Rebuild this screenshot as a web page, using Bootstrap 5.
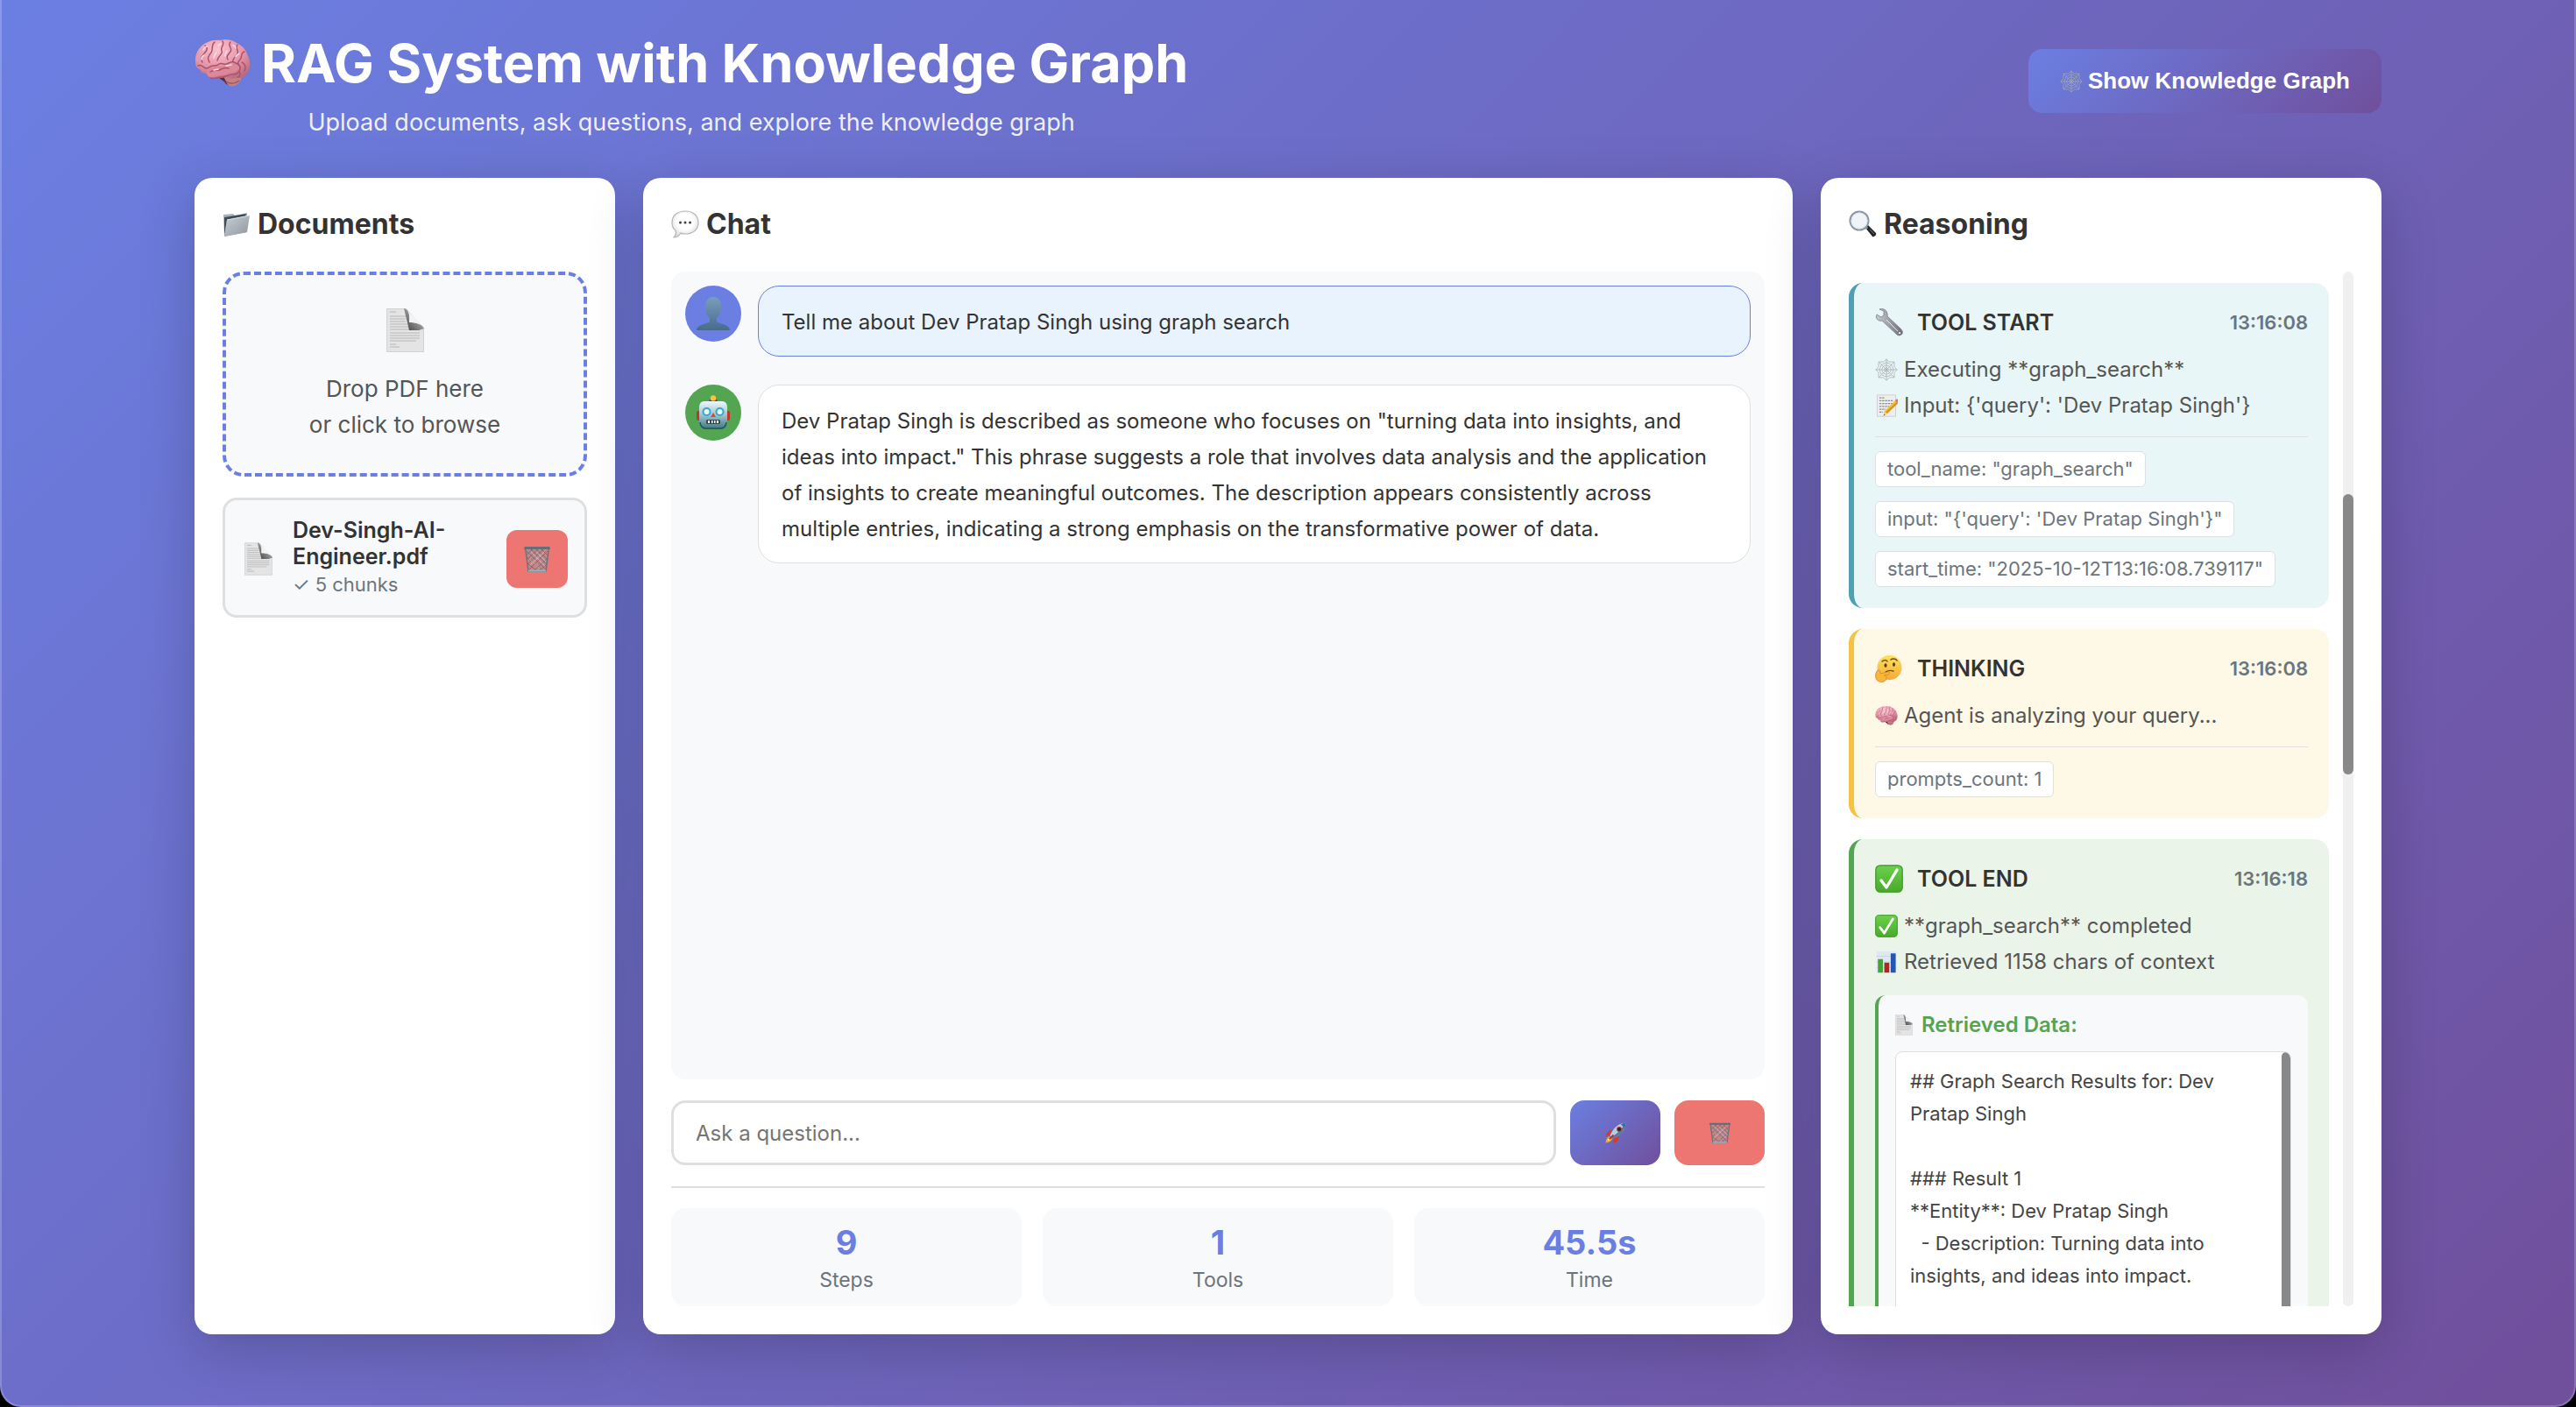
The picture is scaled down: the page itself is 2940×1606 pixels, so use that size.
<!DOCTYPE html>
<html lang="en">
<head>
<meta charset="utf-8">
<meta name="viewport" content="width=device-width, initial-scale=1">
<title>RAG System with Knowledge Graph</title>
<link href="https://cdn.jsdelivr.net/npm/bootstrap@5.3.0/dist/css/bootstrap.min.css" rel="stylesheet">
<style>
:root{--brand:#6b7fe2;--brand-end:#704f9c;--line:#dedfe0;--soft:#f8f9fb;--ink:#333;--body:#555;--muted-ink:#6c757d;--ok:#53a551;--danger:#ed7672}
html{background:#000;height:100%}
body{font-family:Inter,"Liberation Sans",sans-serif;color:var(--ink);background:none;height:100vh;min-height:1000px;margin:0}
.shell{height:100%;padding:32px 32px 81px;background:linear-gradient(135deg,var(--brand),var(--brand-end));border:2px solid rgba(255,255,255,.2);border-top:0;background-origin:border-box;border-radius:0 0 24px 24px}
.wrap{max-width:2496px}
.page-title{font-size:61px;line-height:80px;font-weight:700;color:#fff;gap:12px}
.page-sub{font-size:27px;line-height:44px;color:rgba(255,255,255,.9);margin-top:6px}
.page-head{height:139px}
.grad{background:linear-gradient(135deg,var(--brand),var(--brand-end));color:#fff;border:0}
.grad:hover,.del:hover{color:#fff;opacity:.9}
.graph-btn{font-family:"Liberation Sans",sans-serif;font-size:26px;line-height:29px;font-weight:700;padding:22px 36px;border-radius:16px;gap:6px}
.panels{display:grid;grid-template-columns:480px minmax(0,1fr) 640px;grid-template-rows:minmax(0,1fr);gap:32px;margin-top:32px;min-height:0}
.panel{background:#fff;border-radius:20px;padding:32px;box-shadow:0 16px 64px rgba(0,0,0,.2);min-height:0}
.panel-title{font-size:32px;line-height:42px;font-weight:700;gap:8px;margin:0 0 33px}
.pic{display:block;flex:none}
.p20{width:20px;height:24px}.p26{width:26px;height:26px}.p32{width:32px;height:32px}.p40{width:40px;height:40px}
.p48{width:43px;height:50px}.p62{width:64px;height:56px}.pdoc{width:32px;height:38px}
.drop{border:4px dashed var(--brand);border-radius:24px;background:var(--soft);height:234px;padding-top:38px;gap:21px;color:var(--body);font-size:26px;line-height:41px;cursor:pointer}
.file-card{border:3px solid var(--line);border-radius:16px;background:var(--soft);margin-top:24px;padding:19px 19px 17px 22px;gap:23px}
.file-name{font-size:25px;line-height:30px;font-weight:600}
.file-meta{font-size:22px;line-height:35px;color:var(--muted-ink)}
.del{background:var(--danger);border:0;border-radius:12px}
.del-file{width:70px;height:66px}
.feed{background:var(--soft);border-radius:16px;padding:16px;gap:32px;overflow:hidden}
.msg{gap:19px}
.avatar{width:64px;height:64px;border-radius:50%;flex:none}
.bubble{border:1px solid var(--line);border-radius:24px;background:#fff;padding:20px 28px 18px 26px;font-size:24px;line-height:41px}
.mine{background:#e9f3fd;border-color:var(--brand)}
.av-user{background:var(--brand)}.av-bot{background:var(--ok)}
.ask{gap:16px;margin-top:24px}
.ask-input{height:74px;border:3px solid var(--line);border-radius:16px;padding:0 25px;font-size:24px;color:var(--ink)}
.ask-input::placeholder{color:#757575}
.ask-btn{width:103px;height:74px;border-radius:16px}
.stats{border-top:2px solid var(--line);margin-top:24px;padding-top:23px;gap:24px}
.stat{background:var(--soft);border-radius:16px;height:112px}
.stat-num{font-size:38px;line-height:46px;font-weight:700;color:var(--brand)}
.stat-lab{font-size:23px;line-height:40px;color:var(--muted-ink)}
.scroll-pane{gap:16px;min-height:0}
.steps{overflow:hidden;padding-top:13px;gap:24px}
.step{flex:none;border-left:6px solid;border-radius:16px;padding:24px}
.s-start{background:#e9f6f7;border-color:#4fa0b5}
.s-think{background:#fef8e6;border-color:#f5c344}
.s-end{background:#eaf4e9;border-color:var(--ok)}
.step-head{height:42px;gap:16px;margin-bottom:12px}
.step-name{font-size:25px;line-height:42px;font-weight:600;color:var(--ink)}
.step-time{font-size:22px;line-height:38px;font-weight:600;color:var(--muted-ink)}
.step-line{font-size:24px;line-height:41px;color:var(--body);gap:7px}
.chips{border-top:1px solid var(--line);margin-top:15px;padding-top:16px;gap:16px}
.chip{background:#fff;border:1px solid var(--line);border-radius:6px;padding:0 13px;font-size:22px;line-height:39px;color:var(--muted-ink)}
.data-box{background:var(--soft);border-left:4px solid var(--ok);border-radius:12px;padding:16px 19px;margin-top:18px}
.data-head{font-size:24px;line-height:36px;font-weight:600;color:var(--ok);gap:10px;margin-bottom:12px}
.data-text{background:#fff;border:1px solid var(--line);border-radius:8px;height:420px;overflow:hidden}
.data-pre{font-family:inherit;font-size:22px;line-height:37px;color:#444;white-space:pre-wrap;padding:15px 16px;margin:0;overflow:hidden}
.thumb-in{width:10px;border-radius:5px;background:#888;flex:none}
.track{width:12px;border-radius:6px;background:#f0f0f0;padding-top:254px;flex:none}
.thumb{height:320px;border-radius:6px;background:#888}
</style>
</head>
<body>
<svg width="0" height="0" class="position-absolute" aria-hidden="true">
<defs>
<linearGradient id="gFold" x1="0" y1="0" x2="1" y2="1"><stop offset="0" stop-color="#c9ced4"/><stop offset="1" stop-color="#8f969e"/></linearGradient>
<linearGradient id="gUser" x1="0" y1="0" x2="0" y2="1"><stop offset="0" stop-color="#7b9dbd"/><stop offset="1" stop-color="#466b8d"/></linearGradient>
<linearGradient id="gBot" x1="0" y1="0" x2="0" y2="1"><stop offset="0" stop-color="#eef8fa"/><stop offset=".5" stop-color="#9cc3ca"/><stop offset="1" stop-color="#3b7683"/></linearGradient>
<linearGradient id="gCheck" x1="0" y1="0" x2="0" y2="1"><stop offset="0" stop-color="#6bd04b"/><stop offset="1" stop-color="#46ab2a"/></linearGradient>
<linearGradient id="gFace" x1="0" y1="0" x2="0" y2="1"><stop offset="0" stop-color="#fde35a"/><stop offset="1" stop-color="#f3a93a"/></linearGradient>
<radialGradient id="gBrain" cx=".42" cy=".25" r=".8"><stop offset="0" stop-color="#f9c3d1"/><stop offset=".6" stop-color="#e592a6"/><stop offset="1" stop-color="#b96a7d"/></radialGradient>
<radialGradient id="gTalk" cx=".5" cy=".4" r=".6"><stop offset=".5" stop-color="#fff"/><stop offset="1" stop-color="#dcdcdc"/></radialGradient>
<linearGradient id="gSteel" x1="0" y1="0" x2="1" y2="0"><stop offset="0" stop-color="#c8ccd2"/><stop offset="1" stop-color="#6d7078"/></linearGradient>
<linearGradient id="gCurl" x1="0" y1="1" x2="1" y2="0"><stop offset="0" stop-color="#3c3c3c"/><stop offset=".5" stop-color="#8f8f8f"/><stop offset="1" stop-color="#f4f4f4"/></linearGradient>
</defs>
<symbol id="brain" viewBox="0 0 64 56">
<path d="M28 45c3 3 6 3 8 7l4 1-4-9z" fill="#5b3038"/>
<path d="M33 43c6-3 14-4 20-2 2 5-2 11-7 13-5 1-9-1-10-5z" fill="#c67f83"/><path d="M36 49c4 3 10 3 15-1" fill="none" stroke="#9c5660" stroke-width="1.500"/>
<path d="M1 27C0 18 5 9 13 5c5-3 11-4 17-3 7-2 14 0 18 3 7 3 11 8 13 15 3 6 3 13 0 18-2 5-7 8-13 7-4 1-9 0-13-2-4 2-8 3-11 2-4 2-9 0-10-5-4 0-7-2-8-5-4-1-5-5-5-8z" fill="url(#gBrain)"/>
<path d="M14 41c0-5 3-8 8-8 4-3 8-1 11-2 5-3 9-1 12-3 4-1 7 1 6 5-2 4-6 6-11 6-4 3-9 3-13 3-5 3-10 3-13-1z" fill="#dd8799"/>
<path d="M12 8c4 3 2 6-1 9s-5 6-2 10M23 4c-5 4-1 8-4 12s-5 6-2 11M32 3c3 4-3 7-1 11s-4 5-5 11M41 4c-4 4 3 7 0 11s-5 5-3 9M49 7c-3 4 2 7 0 11s-6 4-5 8M57 15c-5 1-2 6-5 9s-3 4 0 8M4 31c4-2 6 2 9 3s5-4 9-3 6-4 11-2 7-4 12-2 8 4 7 8-5 6-9 6-8 3-12 3-9 3-13 1M18 38c4-3 7-1 10-2s6-4 11-2M54 27c4 2 5 6 3 10M51 38c2 2 1 4-1 6" fill="none" stroke="#a9546c" stroke-width="1.500" stroke-linecap="round"/>
<path d="M10 13c1-2 3-4 5-4M27 8c1-1 2-2 3-2M44 8c1 0 3 1 3 3M8 24c0-2 1-4 3-5M22 22c1-3 2-5 3-6M35 20c0-3 1-4 2-6M47 21c1-2 3-3 4-4M22 36l5-1M36 31l6-1" fill="none" stroke="#fddbe3" stroke-width="1.500" stroke-linecap="round"/>
</symbol>
<symbol id="folder" viewBox="0 0 32 32">
<path d="M1 5l11-1 2 2 14-3v22L2 30z" fill="#aab2b9"/><path d="M2 8l25-4-1 3-21 4-3 18z" fill="#3f4b56"/><path d="M5 11l26-5-3 19L2 30z" fill="url(#gFold)"/><path d="M5 11l26-5" stroke="#dfe4e8" fill="none"/>
</symbol>
<symbol id="doc" viewBox="0 0 43 50">
<path d="M0 0h22l21 22v28H0z" fill="#e4e4e4"/><path d="M.5.5h22L42.500 23v26.500H.5z" fill="none" stroke="#d2d2d2"/>
<path d="M4 4h7M4 9h18M4 12h18M4 15h18M4 18h20M4 21h21M4 24h22M4 28h34M4 31h34M4 34h34M4 37h30M4 41h7M4 44h11" stroke="#b5b5b5" stroke-width="1.100" fill="none"/>
<path d="M20 0c5 1 7 6 6 16 8 0 15 2 17 7l-6 2H26z" fill="url(#gCurl)"/><path d="M22 0l21 22c-4-5-10-6-17-6 1-8 0-13-4-16z" fill="#f3f3f3"/>
</symbol>
<symbol id="bin" viewBox="0 0 32 32">
<path d="M2.500 3L6 30h20l3.500-27" fill="#a5959c" fill-opacity=".45" stroke="#6f7480" stroke-width="1.600"/>
<path d="M4 7l22 21M8 4l19 18M14 4l14 13M20 4l9 9M4 14l18 15M5 21l10 8M28 7L7 28M24 4L5 22M18 4L4 17M12 4L3 12M28 15L13 29M27 22l-8 7" stroke="#65707a" stroke-width=".9"/>
<path d="M9 8l16 16M15 8l11 11M7 16l12 11M24 8L8 23" stroke="#d9dde0" stroke-width=".5"/>
<rect x="1" y="2" width="30" height="3" rx="1.500" fill="#666e78"/><path d="M6 29.500h20" stroke="#9ab0c0" stroke-width="2"/>
</symbol>
<symbol id="talk" viewBox="0 0 32 32">
<path d="M16 1c9 0 15 5 15 13S25 27 16 27c-2 0-4 0-5-1-2 3-5 5-8 5 2-2 3-5 2-8-3-2-4-5-4-9C1 6 7 1 16 1z" fill="url(#gTalk)" stroke="#b5b5b5" stroke-width="1.200"/>
<circle cx="10.500" cy="14" r="1.500" fill="#444"/><circle cx="16" cy="14" r="1.500" fill="#444"/><circle cx="21.500" cy="14" r="1.500" fill="#444"/>
</symbol>
<symbol id="lens" viewBox="0 0 32 32">
<path d="M19 20l3-3 9 9c1 2-2 5-4 4z" fill="#24272a"/><path d="M18 18l3 3" stroke="#8b98a5" stroke-width="3"/><circle cx="12" cy="12" r="10.500" fill="#f1f4f6" stroke="#8997a5" stroke-width="2"/><circle cx="12" cy="12" r="9" fill="none" stroke="#dbe3ea" stroke-width="1"/><path d="M24 22l5 5" stroke="#777" stroke-width="1"/>
</symbol>
<symbol id="person" viewBox="0 0 40 40">
<path d="M20 1c6 0 9 4 9 11 0 6-2 10-5 13v4c3 3 15 3 15 10H1c0-7 12-7 15-10v-4c-3-3-5-7-5-13 0-7 3-11 9-11z" fill="url(#gUser)"/>
</symbol>
<symbol id="robot" viewBox="0 0 40 40">
<rect x="1" y="18" width="5" height="11" rx="2" fill="#c3342f"/><rect x="34" y="18" width="5" height="11" rx="2" fill="#c3342f"/>
<path d="M15 8c0-3 2-4 5-4s5 1 5 4z" fill="#6a3c78"/><circle cx="20" cy="3.500" r="3.200" fill="#f7c43a"/>
<path d="M10 7h20c4 0 6 3 6 7v17c0 5-3 8-7 8H11c-4 0-7-3-7-8V14c0-4 2-7 6-7z" fill="url(#gBot)"/>
<path d="M5 31c0 4 3 7 7 7h16c4 0 7-3 7-7" fill="none" stroke="#24535f" stroke-width="1.500"/>
<circle cx="12.500" cy="19" r="5" fill="#35a5d1"/><circle cx="27.500" cy="19" r="5" fill="#35a5d1"/><circle cx="12.500" cy="19" r="3" fill="#eafcff"/><circle cx="27.500" cy="19" r="3" fill="#eafcff"/>
<path d="M20 20l3 5h-6z" fill="#d9463c"/><rect x="12" y="28" width="16" height="5" rx="1.500" fill="#3c4850"/><path d="M14 30.500h2M18 30.500h1.500M21 30.500h1.500M24 30.500h2" stroke="#fff" stroke-width="3"/>
</symbol>
<symbol id="rocket" viewBox="0 0 32 32">
<path d="M11 12c-4 0-8 4-9 9l6-2zM20 20c1 5-2 9-7 11l0-7z" fill="#d83a22"/>
<path d="M7 21c-4 2-5 6-5 9 3 0 7-1 9-5z" fill="#f6a51f"/><path d="M8 22c-2 1-3 3-3 5 2 0 4-1 5-3z" fill="#fff0a0"/>
<path d="M30 2c-9 0-16 6-20 14l-2 4 4 4 4-2C24 18 30 11 30 2z" fill="#b9cde0"/><path d="M30 2c0 9-6 16-14 20l-4 2-2-2C19 17 26 9 30 2z" fill="#5579a5"/><path d="M30 2c-3 0-5 1-7 2l5 5c1-2 2-5 2-7z" fill="#3d6da7"/>
<circle cx="21" cy="11" r="3.300" fill="#222a35" stroke="#d04a35" stroke-width="1.200"/><path d="M7 25l6-6" stroke="#c9301f" stroke-width="2.500"/>
</symbol>
<symbol id="wrench" viewBox="0 0 32 32">
<path d="M5 1l5 2 0 5-3 2-5-3C0 11 3 15 8 14l16 15c2 3 6 2 7 0s0-4-2-6L14 9C15 4 11-1 5 1z" fill="url(#gSteel)" stroke="#777b83" stroke-width=".8"/><circle cx="28" cy="28" r="1.600" fill="#f3f3f3" stroke="#555" stroke-width=".6"/><path d="M13 13l13 13" stroke="#e8eaee" stroke-width="1"/>
</symbol>
<symbol id="web" viewBox="0 0 32 32">
<g fill="none" stroke="#a5aaae" stroke-width=".9"><path d="M16 1v30M1 16h30M5 5l22 22M27 5L5 27"/><path d="M16 1l3 4 8 0 0 7 4 4-4 4v7h-7l-4 4-4-4H5v-7l-4-4 4-4V5h7z"/><path d="M16 6l7 3 3 7-3 7-7 3-7-3-3-7 3-7z"/><path d="M16 9.500l4.600 2 2 4.500-2 4.600-4.600 2-4.600-2-2-4.600 2-4.500z"/><path d="M16 13l2 1 1 2-1 2-2 1-2-1-1-2 1-2z"/></g>
</symbol>
<symbol id="memo" viewBox="0 0 32 32">
<path d="M3 1h26v30H3z" fill="#eee" stroke="#c9c9c9"/><path d="M6 5h8M6 9h20M6 13h20M6 17h14M6 21h9M6 25h5" stroke="#8d8d8d" stroke-width="1.400" stroke-dasharray="3 1"/>
<path d="M28 9l4 4-15 14-5 3 1-6z" fill="#f4c32d"/><path d="M30 11l2 2-15 14-2-2z" fill="#d99519"/><path d="M28 9l2-2c2-1 4 2 3 4l-1 2z" fill="#e2756a"/><path d="M13 24l4 3-5 3z" fill="#e8caa0"/><path d="M12 30l1-2 1 1z" fill="#222"/>
</symbol>
<symbol id="think" viewBox="0 0 32 32">
<circle cx="16.500" cy="15" r="14" fill="url(#gFace)"/><path d="M8 8c2-2 5-2 6 0M18 6c2-2 6-1 7 1" fill="none" stroke="#7a4b12" stroke-width="1.500" stroke-linecap="round"/><ellipse cx="12" cy="12.500" rx="1.500" ry="2.200" fill="#5a3510"/><ellipse cx="21.500" cy="11.500" rx="1.500" ry="2.200" fill="#5a3510"/><path d="M12 20c3-2 6-2 9-1" fill="none" stroke="#7a4b12" stroke-width="1.400" stroke-linecap="round"/>
<path d="M3 18c2-1 3 1 3 4l9-2c2 0 2 2 0 3l-5 1c4 0 4 5 0 7-4 1-8 0-9-4-1-3 0-7 2-9z" fill="#f8b73b" stroke="#d98c22" stroke-width=".9"/>
</symbol>
<symbol id="tick" viewBox="0 0 32 32">
<rect x=".8" y=".8" width="30.400" height="30.400" rx="5" fill="url(#gCheck)" stroke="#3f9428" stroke-width="1.200"/><path d="M7 18l6 8L25 6" fill="none" stroke="#fff" stroke-width="3.400" stroke-linecap="round" stroke-linejoin="round"/>
</symbol>
<symbol id="bars" viewBox="0 0 32 32">
<path d="M2 1h28v30H2z" fill="#dfe8f1"/><path d="M2 8h28M2 16h28M2 24h28" stroke="#c5d1dc"/><rect x="4" y="12" width="7" height="19" fill="#3fa535"/><rect x="13" y="17" width="7" height="14" fill="#b3251e"/><rect x="22" y="4" width="7" height="27" fill="#2355b5"/>
</symbol>
</svg>

<div class="shell">
<div class="wrap mx-auto h-100 d-flex flex-column">
  <header class="page-head d-flex justify-content-between align-items-start flex-shrink-0">
    <div class="text-center">
      <h1 class="page-title d-flex align-items-center mb-0"><svg class="pic p62" aria-hidden="true"><use href="#brain"/></svg>RAG System with Knowledge Graph</h1>
      <p class="page-sub mb-0">Upload documents, ask questions, and explore the knowledge graph</p>
    </div>
    <button type="button" class="btn grad graph-btn d-flex align-items-center mt-4"><svg class="pic p26" aria-hidden="true"><use href="#web"/></svg>Show Knowledge Graph</button>
  </header>

  <main class="panels flex-grow-1">
    <section class="panel">
      <h2 class="panel-title d-flex align-items-center"><svg class="pic p32" aria-hidden="true"><use href="#folder"/></svg>Documents</h2>
      <label for="pdf" class="drop d-flex flex-column align-items-center text-center"><svg class="pic p48" aria-hidden="true"><use href="#doc"/></svg><span>Drop PDF here<br>or click to browse</span></label>
      <input id="pdf" type="file" accept="application/pdf" class="visually-hidden">
      <div class="file-card d-flex align-items-center">
        <svg class="pic pdoc" aria-hidden="true"><use href="#doc"/></svg>
        <div class="flex-grow-1">
          <div class="file-name">Dev-Singh-AI-Engineer.pdf</div>
          <div class="file-meta">✓ 5 chunks</div>
        </div>
        <button type="button" class="btn del del-file p-0 d-flex align-items-center justify-content-center flex-shrink-0" aria-label="Delete document"><svg class="pic p32" aria-hidden="true"><use href="#bin"/></svg></button>
      </div>
    </section>

    <section class="panel d-flex flex-column">
      <h2 class="panel-title d-flex align-items-center"><svg class="pic p32" aria-hidden="true"><use href="#talk"/></svg>Chat</h2>
      <div class="feed flex-grow-1 d-flex flex-column">
        <div class="msg d-flex align-items-start">
          <div class="avatar av-user d-flex align-items-center justify-content-center"><svg class="pic p40" aria-hidden="true"><use href="#person"/></svg></div>
          <div class="bubble mine flex-grow-1">Tell me about Dev Pratap Singh using graph search</div>
        </div>
        <div class="msg d-flex align-items-start">
          <div class="avatar av-bot d-flex align-items-center justify-content-center"><svg class="pic p40" aria-hidden="true"><use href="#robot"/></svg></div>
          <div class="bubble flex-grow-1">Dev Pratap Singh is described as someone who focuses on "turning data into insights, and ideas into impact." This phrase suggests a role that involves data analysis and the application of insights to create meaningful outcomes. The description appears consistently across multiple entries, indicating a strong emphasis on the transformative power of data.</div>
        </div>
      </div>
      <form class="ask d-flex">
        <label for="question" class="visually-hidden">Question</label>
        <input id="question" type="text" class="form-control ask-input flex-grow-1" placeholder="Ask a question...">
        <button type="button" class="btn grad ask-btn p-0 d-flex align-items-center justify-content-center flex-shrink-0" aria-label="Send"><svg class="pic p26" aria-hidden="true"><use href="#rocket"/></svg></button>
        <button type="button" class="btn del ask-btn p-0 d-flex align-items-center justify-content-center flex-shrink-0" aria-label="Clear chat"><svg class="pic p26" aria-hidden="true"><use href="#bin"/></svg></button>
      </form>
      <div class="stats d-flex text-center">
        <div class="stat flex-fill w-100 pt-3"><div class="stat-num">9</div><div class="stat-lab">Steps</div></div>
        <div class="stat flex-fill w-100 pt-3"><div class="stat-num">1</div><div class="stat-lab">Tools</div></div>
        <div class="stat flex-fill w-100 pt-3"><div class="stat-num">45.5s</div><div class="stat-lab">Time</div></div>
      </div>
    </section>

    <section class="panel d-flex flex-column">
      <h2 class="panel-title d-flex align-items-center"><svg class="pic p32" aria-hidden="true"><use href="#lens"/></svg>Reasoning</h2>
      <div class="scroll-pane d-flex flex-grow-1">
        <div class="steps d-flex flex-column flex-grow-1">
          <article class="step s-start">
            <div class="step-head d-flex align-items-center"><svg class="pic p32" aria-hidden="true"><use href="#wrench"/></svg><span class="step-name flex-grow-1">TOOL START</span><span class="step-time">13:16:08</span></div>
            <div class="step-line d-flex align-items-center"><svg class="pic p26" aria-hidden="true"><use href="#web"/></svg>Executing **graph_search**</div>
            <div class="step-line d-flex align-items-center"><svg class="pic p26" aria-hidden="true"><use href="#memo"/></svg>Input: {'query': 'Dev Pratap Singh'}</div>
            <div class="chips d-flex flex-column align-items-start">
              <span class="chip">tool_name: "graph_search"</span>
              <span class="chip">input: "{'query': 'Dev Pratap Singh'}"</span>
              <span class="chip">start_time: "2025-10-12T13:16:08.739117"</span>
            </div>
          </article>
          <article class="step s-think">
            <div class="step-head d-flex align-items-center"><svg class="pic p32" aria-hidden="true"><use href="#think"/></svg><span class="step-name flex-grow-1">THINKING</span><span class="step-time">13:16:08</span></div>
            <div class="step-line d-flex align-items-center"><svg class="pic p26" aria-hidden="true"><use href="#brain"/></svg>Agent is analyzing your query...</div>
            <div class="chips d-flex flex-column align-items-start"><span class="chip">prompts_count: 1</span></div>
          </article>
          <article class="step s-end">
            <div class="step-head d-flex align-items-center"><svg class="pic p32" aria-hidden="true"><use href="#tick"/></svg><span class="step-name flex-grow-1">TOOL END</span><span class="step-time">13:16:18</span></div>
            <div class="step-line d-flex align-items-center"><svg class="pic p26" aria-hidden="true"><use href="#tick"/></svg>**graph_search** completed</div>
            <div class="step-line d-flex align-items-center"><svg class="pic p26" aria-hidden="true"><use href="#bars"/></svg>Retrieved 1158 chars of context</div>
            <div class="data-box">
              <div class="data-head d-flex align-items-center"><svg class="pic p20" aria-hidden="true"><use href="#doc"/></svg>Retrieved Data:</div>
              <div class="data-text d-flex"><pre class="data-pre flex-grow-1">## Graph Search Results for: Dev Pratap Singh

### Result 1
**Entity**: Dev Pratap Singh
  - Description: Turning data into insights, and ideas into impact.</pre><div class="thumb-in"></div></div>
            </div>
          </article>
        </div>
        <div class="track"><div class="thumb"></div></div>
      </div>
    </section>
  </main>
</div>
</div>
<script src="https://cdn.jsdelivr.net/npm/bootstrap@5.3.0/dist/js/bootstrap.bundle.min.js"></script>
</body>
</html>
